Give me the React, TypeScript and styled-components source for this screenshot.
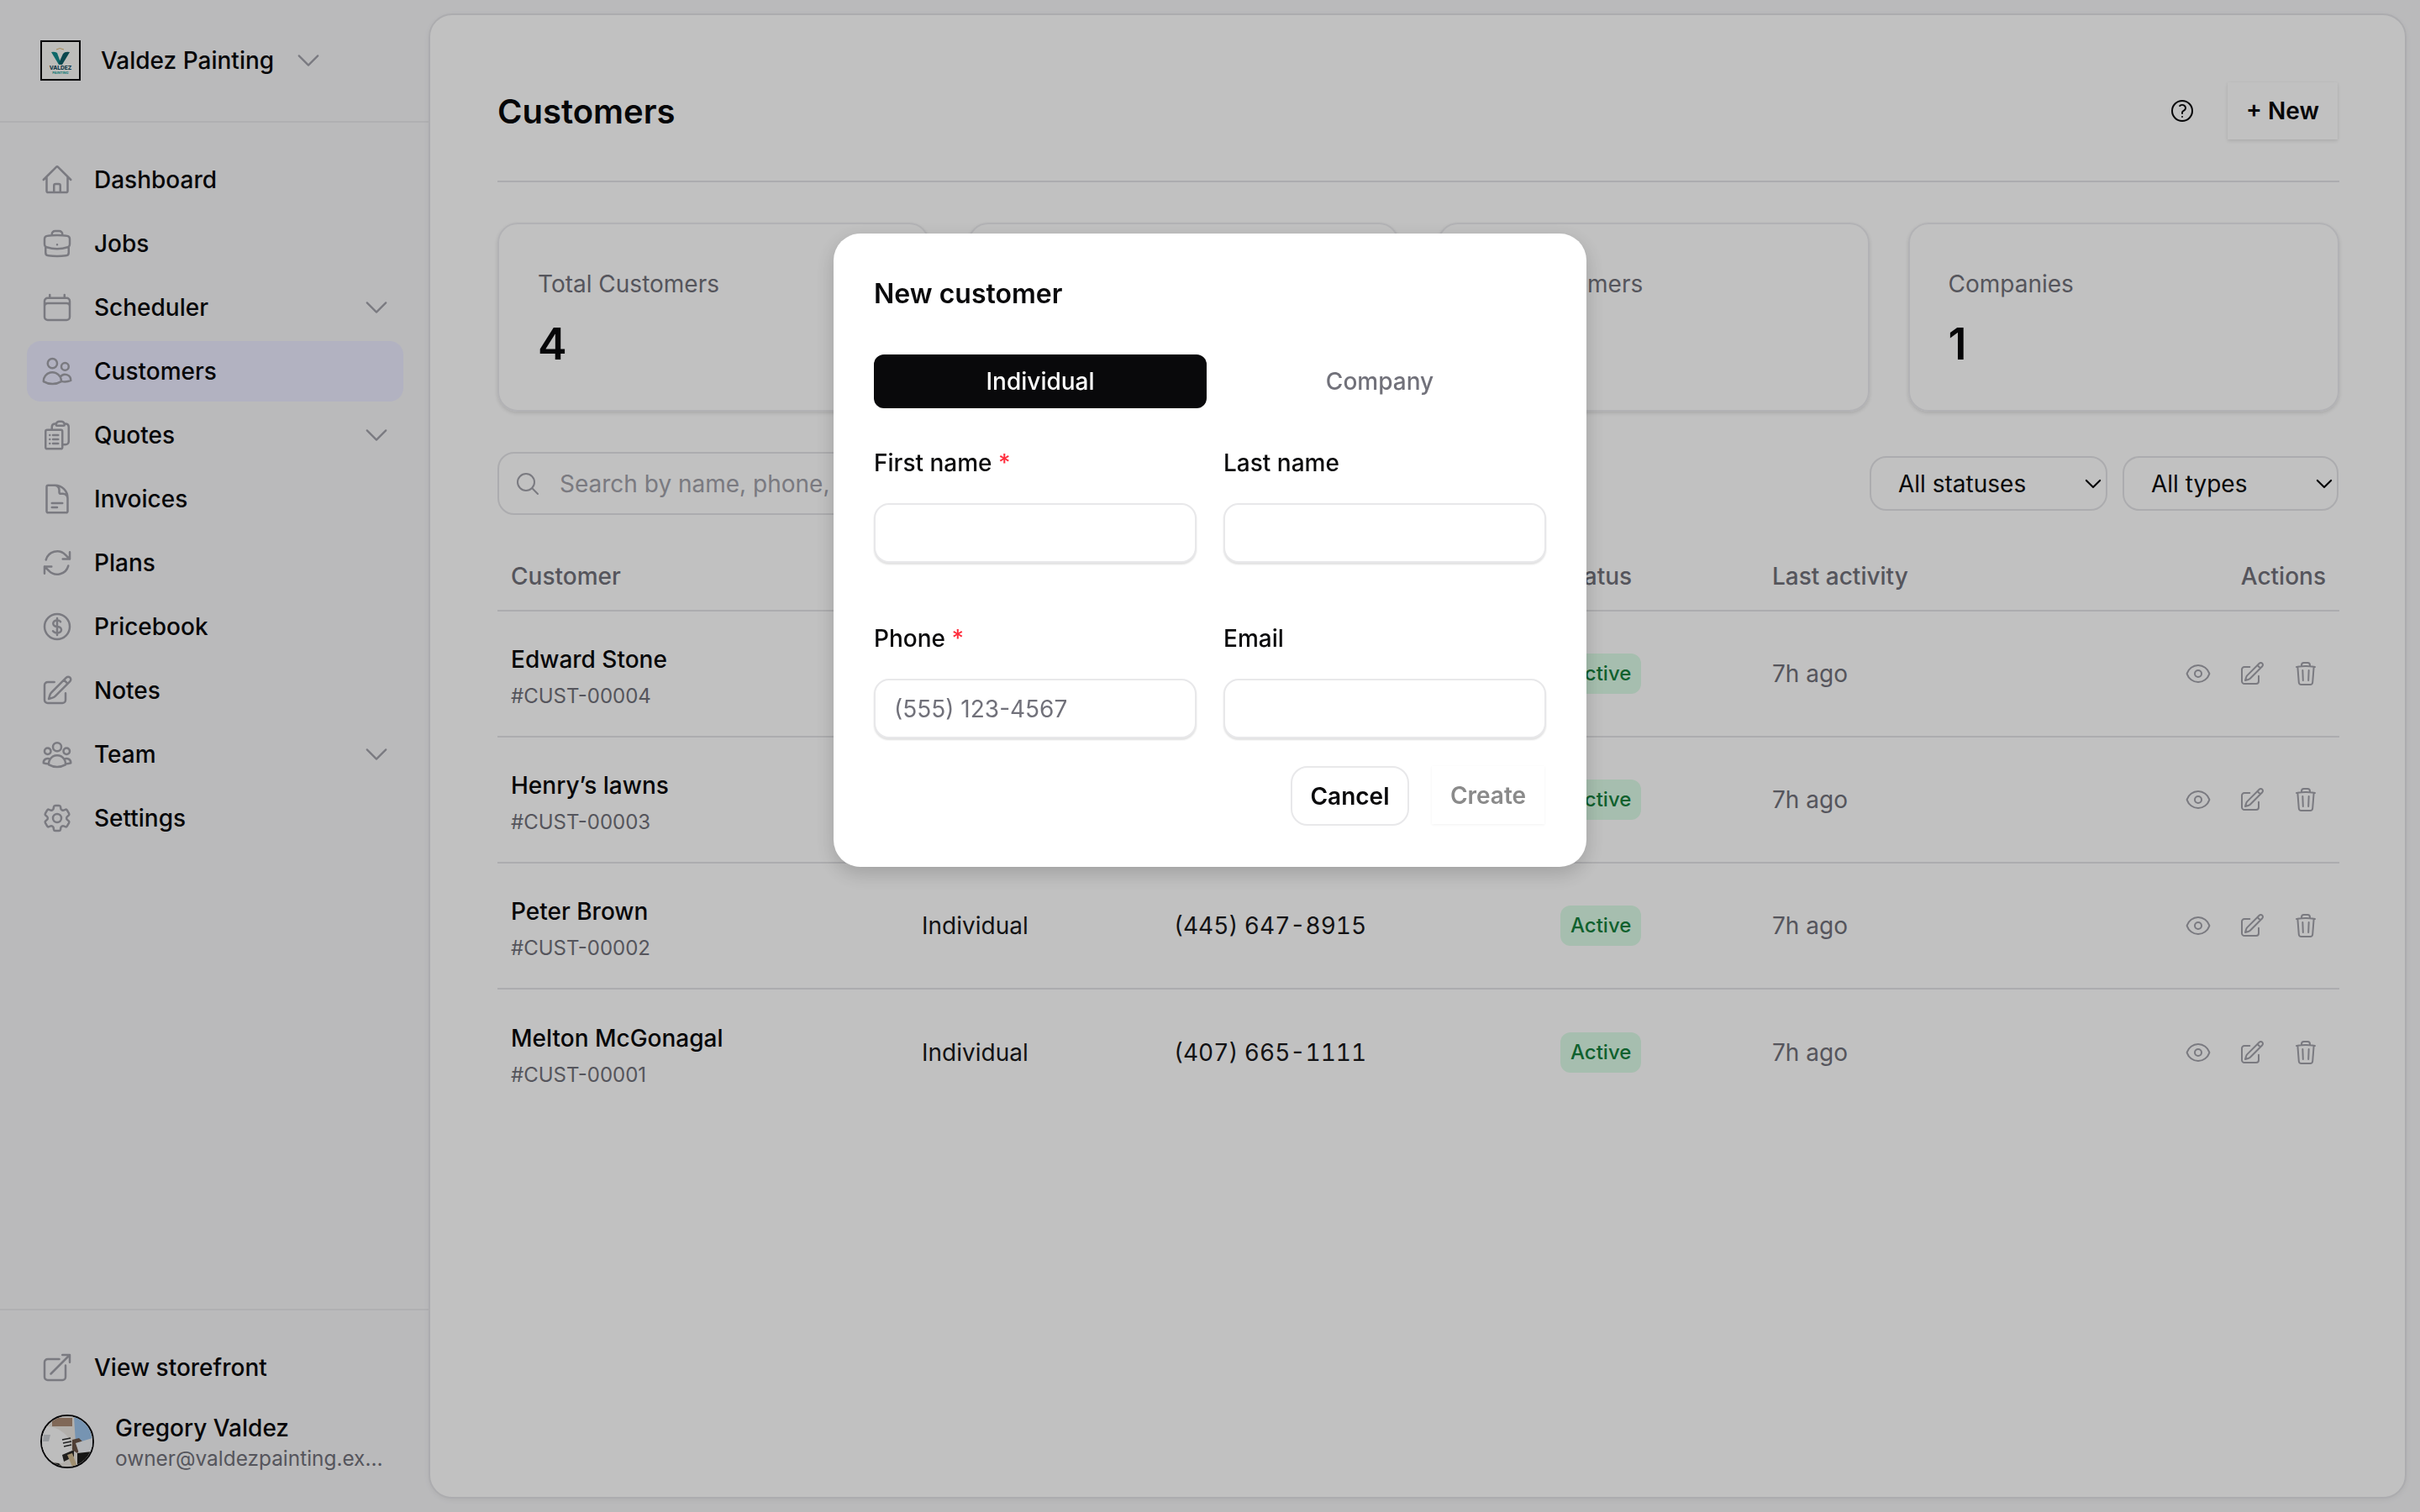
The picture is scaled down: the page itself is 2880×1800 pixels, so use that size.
import React from 'react';
import styled, { createGlobalStyle } from 'styled-components';
import {
  HiOutlineHome,
  HiOutlineBriefcase,
  HiOutlineCalendar,
  HiOutlineUsers,
  HiOutlineClipboardDocumentList,
  HiOutlineDocumentText,
  HiOutlineArrowPath,
  HiOutlineCurrencyDollar,
  HiOutlinePencilSquare,
  HiOutlineUserGroup,
  HiOutlineCog6Tooth,
  HiOutlineArrowTopRightOnSquare,
  HiOutlineChevronDown,
  HiOutlineQuestionMarkCircle,
  HiOutlineMagnifyingGlass,
  HiOutlineEye,
  HiOutlineTrash,
} from 'react-icons/hi2';

const GlobalStyle = createGlobalStyle`
  * { box-sizing: border-box; }
  html, body { margin: 0; padding: 0; height: 100%; }
  body {
    font-family: Inter, "Liberation Sans", sans-serif;
    color: #09090b;
    background: #f6f6f8;
    overflow: hidden;
  }
`;

const Page = styled.div`
  display: flex;
  width: 2880px;
  height: 1800px;
  background: #f6f6f8;
`;

/* sidebar */
const Sidebar = styled.aside`
  width: 510px;
  height: 100%;
  flex-shrink: 0;
  display: flex;
  flex-direction: column;
`;

const Brand = styled.div`
  height: 146px;
  padding-left: 48px;
  display: flex;
  align-items: center;
  border-bottom: 2px solid #e9e9ec;
  font-size: 28px;
  font-weight: 500;
  svg.chev {
    width: 36px;
    height: 36px;
    margin-left: 23px;
    color: #a1a1aa;
  }
`;

const LogoBox = styled.div`
  width: 48px;
  height: 48px;
  border: 2px solid #09090b;
  background: #fafaf6;
  margin-right: 24px;
  flex-shrink: 0;
  svg { display: block; width: 100%; height: 100%; }
`;

const Nav = styled.nav`
  padding: 32px 30px 0 32px;
  display: flex;
  flex-direction: column;
  gap: 4px;
`;

const NavItem = styled.a<{ $active?: boolean }>`
  height: 72px;
  display: flex;
  align-items: center;
  gap: 24px;
  padding: 0 14px 0 16px;
  border-radius: 16px;
  font-size: 28px;
  font-weight: 500;
  background: ${(p) => (p.$active ? '#ececff' : 'transparent')};
  > svg:first-child {
    width: 40px;
    height: 40px;
    color: #a1a1aa;
    flex-shrink: 0;
  }
  span { flex: 1; }
  svg.chev {
    width: 36px;
    height: 36px;
    color: #a1a1aa;
  }
`;

const SideFooter = styled.div`
  margin-top: auto;
  border-top: 2px solid #e9e9ec;
  padding: 32px 30px 52px 32px;
`;

const UserRow = styled.div`
  margin-top: 20px;
  height: 64px;
  padding-left: 16px;
  display: flex;
  align-items: center;
  gap: 25px;
`;

const Avatar = styled.div`
  width: 64px;
  height: 64px;
  border-radius: 50%;
  border: 2px solid #09090b;
  overflow: hidden;
  flex-shrink: 0;
  svg { display: block; width: 100%; height: 100%; }
`;

const UserText = styled.div`
  min-width: 0;
  width: 320px;
  margin-top: 4px;
`;

const UserName = styled.div`
  font-size: 28px;
  line-height: 36px;
  font-weight: 500;
`;

const UserMail = styled.div`
  font-size: 24.4px;
  line-height: 36px;
  color: #71717a;
  white-space: nowrap;
  overflow: hidden;
  text-overflow: ellipsis;
`;

/* main panel */
const Panel = styled.main`
  flex: 1;
  margin: 16px 16px 16px 0;
  padding: 80px 78px 0 80px;
  background: #fff;
  border: 2px solid #e4e4e7;
  border-radius: 28px;
  box-shadow: 0 2px 6px rgba(0, 0, 0, 0.06);
`;

const TopBar = styled.header`
  display: flex;
  align-items: center;
  justify-content: space-between;
  height: 119px;
  padding-bottom: 49px;
  border-bottom: 2px solid #e4e4e7;
`;

const Title = styled.h1`
  margin: 0;
  font-size: 40px;
  font-weight: 600;
`;

const TopActions = styled.div`
  display: flex;
  align-items: center;
  gap: 38px;
  svg { width: 32px; height: 32px; color: #09090b; }
`;

const NewButton = styled.button`
  height: 68px;
  width: 131px;
  margin-right: 2px;
  border: none;
  background: #fff;
  font: 600 28px Inter, sans-serif;
  color: #09090b;
  box-shadow: 0 2px 4px rgba(0, 0, 0, 0.1), 0 0 1px rgba(0, 0, 0, 0.08);
`;

const Stats = styled.section`
  margin-top: 48px;
  display: grid;
  grid-template-columns: repeat(4, 1fr);
  gap: 46px;
`;

const StatCard = styled.div`
  height: 225px;
  padding: 51px 47px 0 46px;
  border: 2px solid #ececef;
  border-radius: 24px;
  box-shadow: 0 2px 4px rgba(0, 0, 0, 0.12);
`;

const StatLabel = styled.div`
  font-size: 28px;
  line-height: 40px;
  color: #71717a;
`;

const StatValue = styled.div`
  margin-top: 20px;
  font-size: 52px;
  line-height: 64px;
  font-weight: 600;
`;

const FilterRow = styled.div`
  margin-top: 48px;
  height: 75px;
  display: flex;
  align-items: center;
  justify-content: space-between;
`;

const SearchBox = styled.label`
  width: 800px;
  height: 75px;
  display: flex;
  align-items: center;
  gap: 20px;
  padding: 0 18px;
  border: 2px solid #e4e4e7;
  border-radius: 20px;
  svg { width: 32px; height: 32px; color: #a1a1aa; flex-shrink: 0; }
  input {
    flex: 1;
    border: none;
    outline: none;
    background: transparent;
    font: 400 28px Inter, sans-serif;
    &::placeholder { color: #a1a1aa; opacity: 1; }
  }
`;

const Selects = styled.div`
  display: flex;
  gap: 18px;
  margin-right: 1px;
`;

const SelectWrap = styled.div<{ $width: number }>`
  position: relative;
  width: ${(p) => p.$width}px;
  select {
    width: 100%;
    height: 65px;
    padding: 0 32px;
    appearance: none;
    background: transparent;
    border: 2px solid #e4e4e7;
    border-radius: 20px;
    font: 400 28px Inter, sans-serif;
    color: #09090b;
  }
  svg {
    position: absolute;
    right: 4px;
    top: 20px;
    width: 26px;
    height: 26px;
    stroke-width: 2;
  }
`;

const TableRow = styled.div<{ $head?: boolean }>`
  display: grid;
  grid-template-columns: 489px 300px 460px 252px 1fr 240px;
  align-items: center;
  padding: 0 16px;
  height: ${(p) => (p.$head ? '82px' : '150px')};
  border-bottom: 2px solid #e4e4e7;
  &:last-child { border-bottom: none; }
`;

const Table = styled.section`
  margin-top: 33px;
`;

const HeadCell = styled.div<{ $right?: boolean }>`
  font-size: 28px;
  font-weight: 500;
  color: #71717a;
  text-align: ${(p) => (p.$right ? 'right' : 'left')};
`;

const CustomerCell = styled.div`
  padding-top: 7px;
`;

const CustomerName = styled.div`
  font-size: 28px;
  line-height: 40px;
  font-weight: 500;
`;

const CustomerId = styled.div`
  margin-top: 6px;
  font-size: 24px;
  line-height: 36px;
  color: #71717a;
`;

const TypeCell = styled.div`
  font-size: 28px;
  color: #18181b;
`;

const PhoneCell = styled.div`
  font-size: 28px;
  font-variant-numeric: tabular-nums;
  color: #18181b;
`;

const Badge = styled.span`
  display: inline-block;
  height: 48px;
  line-height: 48px;
  padding: 0 12px;
  border-radius: 12px;
  background: #dcfce7;
  color: #15803d;
  font-size: 24px;
  font-weight: 500;
`;

const Muted = styled.div`
  font-size: 28px;
  color: #71717a;
`;

const RowActions = styled.div`
  display: flex;
  justify-content: flex-end;
  gap: 32px;
  padding-right: 8px;
  svg { width: 32px; height: 32px; color: #a1a1aa; display: block; }
`;

/* dialog */
const Backdrop = styled.div`
  position: fixed;
  inset: 0;
  background: rgba(0, 0, 0, 0.245);
  display: flex;
  justify-content: center;
  align-items: flex-start;
  padding-top: 278px;
`;

const Dialog = styled.div`
  width: 896px;
  height: 754px;
  padding: 48px;
  background: #fff;
  border-radius: 32px;
  box-shadow: 0 8px 24px rgba(0, 0, 0, 0.18);
`;

const DialogTitle = styled.h2`
  margin: 0;
  height: 48px;
  line-height: 48px;
  font-size: 32px;
  font-weight: 600;
`;

const Tabs = styled.div`
  margin-top: 48px;
  display: grid;
  grid-template-columns: 1fr 1fr;
  gap: 8px;
`;

const Tab = styled.button<{ $active?: boolean }>`
  height: 64px;
  border: none;
  border-radius: 12px;
  font: 500 28px Inter, sans-serif;
  background: ${(p) => (p.$active ? '#09090b' : 'transparent')};
  color: ${(p) => (p.$active ? '#fff' : '#71717a')};
`;

const FormGrid = styled.div`
  margin-top: 45px;
  display: grid;
  grid-template-columns: 384px 384px;
  column-gap: 32px;
  row-gap: 70px;
`;

const FieldLabel = styled.label`
  display: block;
  height: 40px;
  line-height: 40px;
  font-size: 28px;
  font-weight: 500;
  i { font-style: normal; color: #ff2d3d; }
`;

const Input = styled.input`
  display: block;
  width: 100%;
  height: 71px;
  margin-top: 28px;
  padding: 0 22px;
  border: 2px solid #e8e8ea;
  border-radius: 18px;
  outline: none;
  font: 400 28px Inter, sans-serif;
  box-shadow: 0 2px 2px rgba(0, 0, 0, 0.12);
  &::placeholder { color: #71717a; opacity: 1; }
`;

const DialogActions = styled.div`
  margin-top: 33px;
  display: flex;
  justify-content: flex-end;
  align-items: flex-start;
  gap: 27px;
`;

const CancelButton = styled.button`
  width: 141px;
  height: 71px;
  background: #fff;
  border: 2px solid #e8e8ea;
  border-radius: 20px;
  font: 600 28px Inter, sans-serif;
  color: #09090b;
`;

const CreateButton = styled.button`
  width: 134px;
  height: 69px;
  margin-right: 2px;
  border: none;
  background: #fff;
  font: 600 28px Inter, sans-serif;
  color: #8a8a8a;
  box-shadow: 0 1px 3px rgba(0, 0, 0, 0.06);
`;

const Logo = () => (
  <svg viewBox="0 0 44 44">
    <rect width="44" height="44" fill="#fafaf6" />
    <path d="M11 12 Q15 11 18 13 L23 27 L20 27 Z" fill="#138a8c" />
    <path d="M33 12 Q27 11 25 14 L20 25 L22 27 L24 27 Z" fill="#0f5f68" />
    <path d="M17 9 Q21 6 26 9" stroke="#d6a44a" strokeWidth="0.8" fill="none" />
    <text x="22" y="33" fontSize="6.6" fontWeight="800" fill="#1f4f5f" textAnchor="middle" fontFamily="Inter">VALDEZ</text>
    <text x="22" y="37.5" fontSize="4" fontWeight="700" fill="#1da39c" textAnchor="middle" fontFamily="Inter">PAINTING</text>
  </svg>
);

const AvatarArt = () => (
  <svg viewBox="0 0 60 60">
    <rect width="60" height="60" fill="#ece8e2" />
    <rect x="12" y="2" width="24" height="10" fill="#a98a74" />
    <path d="M38 0 L56 0 L60 34 L40 32Z" fill="#9cc4ec" />
    <path d="M0 12 Q18 10 32 26 L36 46 L24 56 L0 52Z" fill="#fafafa" />
    <path d="M2 22 l8 0 l-2 8 l-7 0Z" fill="#c9cdd2" />
    <path d="M24 28 l10 -2 M25 32 l10 -2 M26 36 l9 -2" stroke="#2a2a2a" strokeWidth="1.6" />
    <path d="M24 46 L38 40 L38 48 L26 54Z" fill="#2b2a28" />
    <path d="M36 28 L44 26 L50 32 L42 44 L36 40Z" fill="#6a5446" />
    <path d="M40 32 L60 26 L60 42 L44 44Z" fill="#eef1f5" />
    <path d="M42 44 L60 42 L60 60 L42 60Z" fill="#1d1c1b" />
    <path d="M0 54 L20 56 L24 60 L0 60Z" fill="#2b2a28" />
    <path d="M30 46 L36 60 L42 60 L36 44Z" fill="#d4bd94" />
  </svg>
);

const navItems = [
  { label: 'Dashboard', Icon: HiOutlineHome },
  { label: 'Jobs', Icon: HiOutlineBriefcase },
  { label: 'Scheduler', Icon: HiOutlineCalendar, more: true },
  { label: 'Customers', Icon: HiOutlineUsers, active: true },
  { label: 'Quotes', Icon: HiOutlineClipboardDocumentList, more: true },
  { label: 'Invoices', Icon: HiOutlineDocumentText },
  { label: 'Plans', Icon: HiOutlineArrowPath },
  { label: 'Pricebook', Icon: HiOutlineCurrencyDollar },
  { label: 'Notes', Icon: HiOutlinePencilSquare },
  { label: 'Team', Icon: HiOutlineUserGroup, more: true },
  { label: 'Settings', Icon: HiOutlineCog6Tooth },
];

const stats = [
  { label: 'Total Customers', value: '4' },
  { label: 'Individuals', value: '3' },
  { label: 'VIP Customers', value: '0' },
  { label: 'Companies', value: '1' },
];

const customers = [
  { name: 'Edward Stone', id: '#CUST-00004', type: 'Individual', phone: '(321) 555-0144' },
  { name: 'Henry\u2019s lawns', id: '#CUST-00003', type: 'Company', phone: '(321) 555-0178' },
  { name: 'Peter Brown', id: '#CUST-00002', type: 'Individual', phone: '(445) 647-8915' },
  { name: 'Melton McGonagal', id: '#CUST-00001', type: 'Individual', phone: '(407) 665-1111' },
];

const App: React.FC = () => {
  return (
    <>
      <GlobalStyle />
      <Page>
        <Sidebar>
          <Brand>
            <LogoBox>
              <Logo />
            </LogoBox>
            Valdez Painting
            <HiOutlineChevronDown className="chev" />
          </Brand>
          <Nav>
            {navItems.map(({ label, Icon, more, active }) => (
              <NavItem key={label} $active={active}>
                <Icon />
                <span>{label}</span>
                {more && <HiOutlineChevronDown className="chev" />}
              </NavItem>
            ))}
          </Nav>
          <SideFooter>
            <NavItem>
              <HiOutlineArrowTopRightOnSquare />
              <span>View storefront</span>
            </NavItem>
            <UserRow>
              <Avatar>
                <AvatarArt />
              </Avatar>
              <UserText>
                <UserName>Gregory Valdez</UserName>
                <UserMail>owner@valdezpainting.example.com</UserMail>
              </UserText>
            </UserRow>
          </SideFooter>
        </Sidebar>

        <Panel>
          <TopBar>
            <Title>Customers</Title>
            <TopActions>
              <HiOutlineQuestionMarkCircle />
              <NewButton>+ New</NewButton>
            </TopActions>
          </TopBar>

          <Stats>
            {stats.map((s) => (
              <StatCard key={s.label}>
                <StatLabel>{s.label}</StatLabel>
                <StatValue>{s.value}</StatValue>
              </StatCard>
            ))}
          </Stats>

          <FilterRow>
            <SearchBox>
              <HiOutlineMagnifyingGlass />
              <input placeholder="Search by name, phone, email..." />
            </SearchBox>
            <Selects>
              <SelectWrap $width={283}>
                <select defaultValue="all">
                  <option value="all">All statuses</option>
                </select>
                <HiOutlineChevronDown />
              </SelectWrap>
              <SelectWrap $width={257}>
                <select defaultValue="all">
                  <option value="all">All types</option>
                </select>
                <HiOutlineChevronDown />
              </SelectWrap>
            </Selects>
          </FilterRow>

          <Table>
            <TableRow $head>
              <HeadCell>Customer</HeadCell>
              <HeadCell>Type</HeadCell>
              <HeadCell>Phone</HeadCell>
              <HeadCell>Status</HeadCell>
              <HeadCell>Last activity</HeadCell>
              <HeadCell $right>Actions</HeadCell>
            </TableRow>
            {customers.map((c) => (
              <TableRow key={c.id}>
                <CustomerCell>
                  <CustomerName>{c.name}</CustomerName>
                  <CustomerId>{c.id}</CustomerId>
                </CustomerCell>
                <TypeCell>{c.type}</TypeCell>
                <PhoneCell>{c.phone}</PhoneCell>
                <div>
                  <Badge>Active</Badge>
                </div>
                <Muted>7h ago</Muted>
                <RowActions>
                  <HiOutlineEye />
                  <HiOutlinePencilSquare />
                  <HiOutlineTrash />
                </RowActions>
              </TableRow>
            ))}
          </Table>
        </Panel>
      </Page>

      <Backdrop>
        <Dialog>
          <DialogTitle>New customer</DialogTitle>
          <Tabs>
            <Tab $active>Individual</Tab>
            <Tab>Company</Tab>
          </Tabs>
          <FormGrid>
            <div>
              <FieldLabel>
                First name <i>*</i>
              </FieldLabel>
              <Input />
            </div>
            <div>
              <FieldLabel>Last name</FieldLabel>
              <Input />
            </div>
            <div>
              <FieldLabel>
                Phone <i>*</i>
              </FieldLabel>
              <Input placeholder="(555) 123-4567" />
            </div>
            <div>
              <FieldLabel>Email</FieldLabel>
              <Input />
            </div>
          </FormGrid>
          <DialogActions>
            <CancelButton>Cancel</CancelButton>
            <CreateButton>Create</CreateButton>
          </DialogActions>
        </Dialog>
      </Backdrop>
    </>
  );
};

export default App;
